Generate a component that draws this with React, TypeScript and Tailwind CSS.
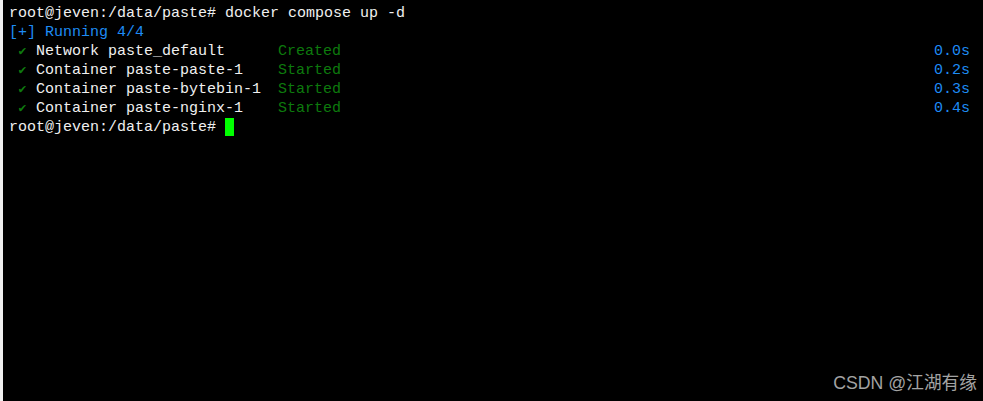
import React from 'react';

type Step = {
  kind: string;
  name: string;
  status: string;
  time: string;
};

const steps: Step[] = [
  { kind: 'Network', name: 'paste_default', status: 'Created', time: '0.0s' },
  { kind: 'Container', name: 'paste-paste-1', status: 'Started', time: '0.2s' },
  { kind: 'Container', name: 'paste-bytebin-1', status: 'Started', time: '0.3s' },
  { kind: 'Container', name: 'paste-nginx-1', status: 'Started', time: '0.4s' },
];

const prompt = 'root@jeven:/data/paste#';

export default function App() {
  return (
    <div className="relative h-[401px] w-full overflow-hidden border-l-[3px] border-[#f0f0f0] bg-black">
      <div
        className="flex flex-col pl-[6px] pr-[13px] pt-[4px] text-[15px] leading-[19px] text-[#f0f0f0] whitespace-pre"
        style={{ fontFamily: '"Liberation Mono", "DejaVu Sans Mono", monospace' }}
      >
        <div className="h-[19px]">{prompt} docker compose up -d</div>
        <div className="h-[19px] text-[#1e8cf5]">[+] Running 4/4</div>

        {steps.map((step) => (
          <div key={step.name} className="flex h-[19px] items-start">
            <span className="w-[269px]">
              {' '}
              <span className="inline-block w-[9px] text-center align-top text-[13px] leading-[19px] text-[#0f7a0f]">✔</span>
              {' '}
              {step.kind} {step.name}
            </span>
            <span className="text-[#0d7a0d]">{step.status}</span>
            <span className="ml-auto text-[#1e8cf5]">{step.time}</span>
          </div>
        ))}

        <div className="flex h-[19px] items-start">
          <span>{prompt} </span>
          <span className="inline-block h-[18px] w-[9px] bg-[#00ff00]" />
        </div>
      </div>

      {/* watermark */}
      <div
        className="absolute bottom-[8px] right-[6px] text-[17.7px] leading-none text-[#a3a3a3]"
        style={{ fontFamily: 'Arial, "Liberation Sans", "Noto Sans CJK SC", sans-serif' }}
      >
        CSDN @江湖有缘
      </div>
    </div>
  );
}
